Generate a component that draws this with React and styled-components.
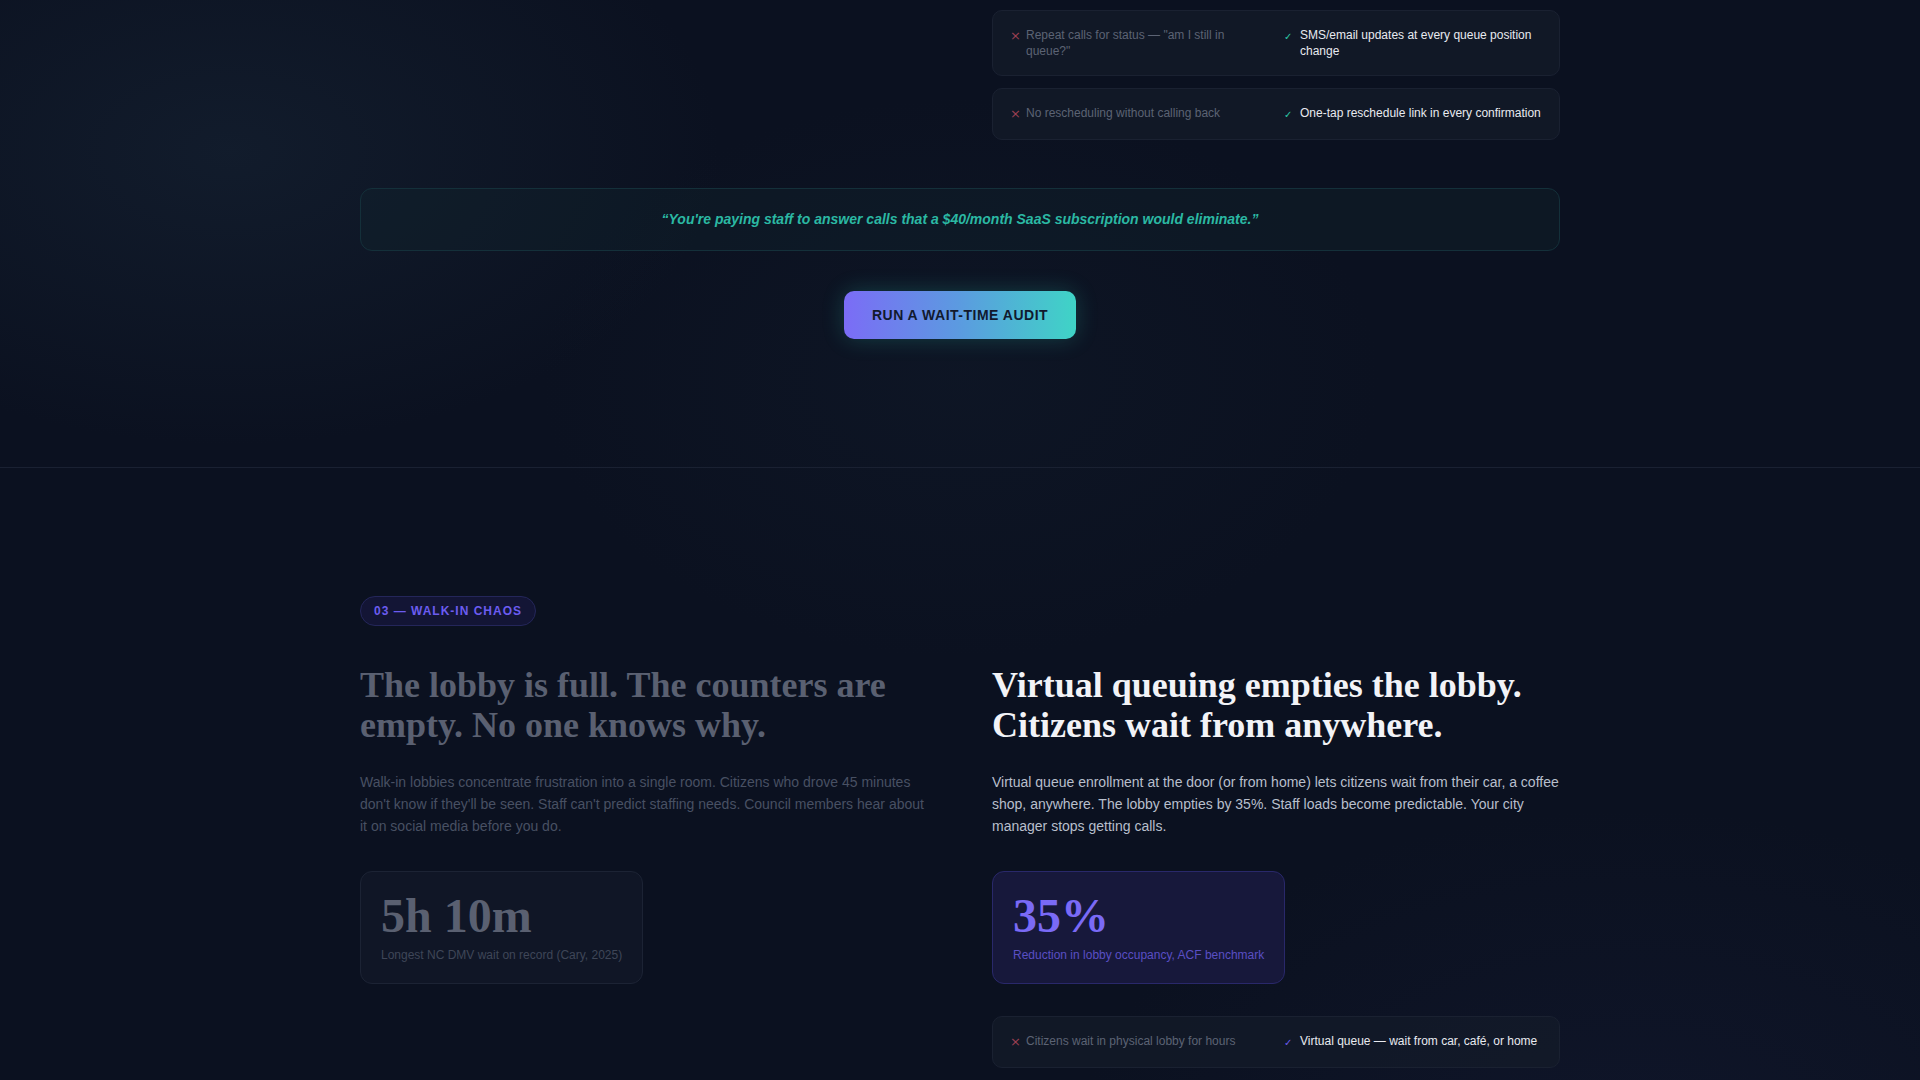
import React from "react";
import styled, { createGlobalStyle } from "styled-components";

const GlobalStyle = createGlobalStyle`
  * { box-sizing: border-box; }
  html, body { margin: 0; padding: 0; }
  body {
    background: #0b1120;
    font-family: "Liberation Sans", Arial, sans-serif;
    color: #e5e7eb;
  }
`;

const Page = styled.div`
  min-height: 1080px;
  background:
    radial-gradient(ellipse 700px 420px at 12% 12%, rgba(30, 48, 66, 0.35), transparent 70%),
    radial-gradient(ellipse 800px 500px at 85% 92%, rgba(24, 30, 60, 0.35), transparent 70%),
    radial-gradient(ellipse 600px 400px at 50% 30%, rgba(18, 28, 44, 0.4), transparent 70%),
    #0b1120;
`;

const Section = styled.section`
  padding: ${(p) => p.$pad};
  border-top: ${(p) => (p.$divider ? "1px solid #1a2132" : "none")};
`;

const Container = styled.div`
  width: 1200px;
  margin: 0 auto;
`;

const Columns = styled.div`
  display: grid;
  grid-template-columns: 568px 568px;
  column-gap: 64px;
  align-items: start;
`;

const Column = styled.div`
  display: flex;
  flex-direction: column;
`;

const RowStack = styled.div`
  display: flex;
  flex-direction: column;
  gap: 12px;
  margin-top: ${(p) => p.$top || "0"};
`;

const CompareRow = styled.div`
  display: grid;
  grid-template-columns: 1fr 1fr;
  column-gap: 16px;
  padding: 16px 17px;
  background: rgba(20, 27, 42, 0.7);
  border: 1px solid #1a2131;
  border-radius: 10px;
`;

const Item = styled.div`
  display: flex;
  align-items: flex-start;
  font-size: 12px;
  line-height: 16px;
  color: ${(p) => (p.$good ? "#e8eaf0" : "#5c6374")};
`;

const Mark = styled.span`
  flex: 0 0 16px;
  font-size: ${(p) => (p.$good ? "10px" : "13px")};
  line-height: 16px;
  padding-top: ${(p) => (p.$good ? "2px" : "1px")};
  color: ${(p) => p.$color};
  font-family: "DejaVu Sans", sans-serif;
`;

const Quote = styled.div`
  margin-top: 48px;
  padding: 20px 24px;
  border: 1px solid #14303a;
  border-radius: 12px;
  background: rgba(16, 38, 46, 0.35);
  text-align: center;
  font-size: 14px;
  line-height: 21px;
  font-weight: 700;
  font-style: italic;
  color: #2bb8a3;
`;

const ButtonRow = styled.div`
  display: flex;
  justify-content: center;
  margin-top: 40px;
`;

const CtaButton = styled.button`
  border: none;
  border-radius: 10px;
  padding: 15px 28px;
  font-family: "Liberation Sans", Arial, sans-serif;
  font-size: 14px;
  line-height: 18px;
  font-weight: 700;
  letter-spacing: 0.5px;
  color: #111a2e;
  background: linear-gradient(90deg, #7b6cf6 0%, #5b9be0 50%, #3fd4c6 100%);
  box-shadow: 0 0 22px rgba(45, 212, 191, 0.22);
  cursor: pointer;
`;

const Badge = styled.div`
  align-self: flex-start;
  display: inline-flex;
  padding: 7px 13px;
  border: 1px solid #24265a;
  border-radius: 999px;
  background: #131535;
  color: #6b5cf0;
  font-size: 12px;
  line-height: 14px;
  font-weight: 700;
  letter-spacing: 1px;
  margin-bottom: 40px;
`;

const Heading = styled.h2`
  margin: 0;
  font-family: "Liberation Serif", "Times New Roman", serif;
  font-size: 36px;
  line-height: 1.1;
  font-weight: 700;
  color: ${(p) => (p.$muted ? "#5a6071" : "#f2f3f7")};
`;

const Body = styled.p`
  margin: 26px 0 0;
  font-size: 14px;
  line-height: 22px;
  color: ${(p) => (p.$muted ? "#485063" : "#b8bfcc")};
`;

const StatCard = styled.div`
  align-self: flex-start;
  margin-top: 34px;
  padding: 20px 20px 19px;
  border-radius: 12px;
  border: 1px solid ${(p) => (p.$accent ? "#29286a" : "#1c2334")};
  background: ${(p) => (p.$accent ? "#17183b" : "rgba(18, 24, 40, 0.8)")};
`;

const StatValue = styled.div`
  font-family: "Liberation Serif", "Times New Roman", serif;
  font-size: 48px;
  line-height: 1;
  font-weight: 700;
  color: ${(p) => (p.$accent ? "#7a6af6" : "#5a6071")};
`;

const StatLabel = styled.div`
  margin-top: 7px;
  font-size: 12px;
  line-height: 1.4;
  color: ${(p) => (p.$accent ? "#5a4fc4" : "#3f4658")};
`;

const Compare = ({ bad, good, check }) => (
  <CompareRow>
    <Item>
      <Mark $color="#9b3f52">×</Mark>
      <span>{bad}</span>
    </Item>
    <Item $good>
      <Mark $good $color={check}>✓</Mark>
      <span>{good}</span>
    </Item>
  </CompareRow>
);

export default function App() {
  return (
    <Page>
      <GlobalStyle />
      <Section $pad="10px 0 128px">
        <Container>
          <Columns>
            <Column />
            <Column>
              <RowStack>
                <Compare
                  bad={"Repeat calls for status — \"am I still in queue?\""}
                  good="SMS/email updates at every queue position change"
                  check="#2cc9a8"
                />
                <Compare
                  bad="No rescheduling without calling back"
                  good="One-tap reschedule link in every confirmation"
                  check="#2cc9a8"
                />
              </RowStack>
            </Column>
          </Columns>
          <Quote>
            “You're paying staff to answer calls that a $40/month SaaS subscription would eliminate.”
          </Quote>
          <ButtonRow>
            <CtaButton>RUN A WAIT-TIME AUDIT</CtaButton>
          </ButtonRow>
        </Container>
      </Section>

      <Section $divider $pad="128px 0 128px">
        <Container>
          <Column>
            <Badge>03 — WALK-IN CHAOS</Badge>
          </Column>
          <Columns>
            <Column>
              <Heading $muted>
                The lobby is full. The counters are empty. No one knows why.
              </Heading>
              <Body $muted>
                Walk-in lobbies concentrate frustration into a single room. Citizens who drove 45
                minutes don't know if they'll be seen. Staff can't predict staffing needs. Council
                members hear about it on social media before you do.
              </Body>
              <StatCard>
                <StatValue>5h 10m</StatValue>
                <StatLabel>Longest NC DMV wait on record (Cary, 2025)</StatLabel>
              </StatCard>
            </Column>
            <Column>
              <Heading>
                Virtual queuing empties the lobby. Citizens wait from anywhere.
              </Heading>
              <Body>
                Virtual queue enrollment at the door (or from home) lets citizens wait from their
                car, a coffee shop, anywhere. The lobby empties by 35%. Staff loads become
                predictable. Your city manager stops getting calls.
              </Body>
              <StatCard $accent>
                <StatValue $accent>35%</StatValue>
                <StatLabel $accent>Reduction in lobby occupancy, ACF benchmark</StatLabel>
              </StatCard>
              <RowStack $top="32px">
                <Compare
                  bad="Citizens wait in physical lobby for hours"
                  good="Virtual queue — wait from car, café, or home"
                  check="#6a5cf0"
                />
                <Compare
                  bad="No idea how many people are waiting"
                  good="Live lobby count on a staff dashboard"
                  check="#6a5cf0"
                />
              </RowStack>
            </Column>
          </Columns>
        </Container>
      </Section>
    </Page>
  );
}
